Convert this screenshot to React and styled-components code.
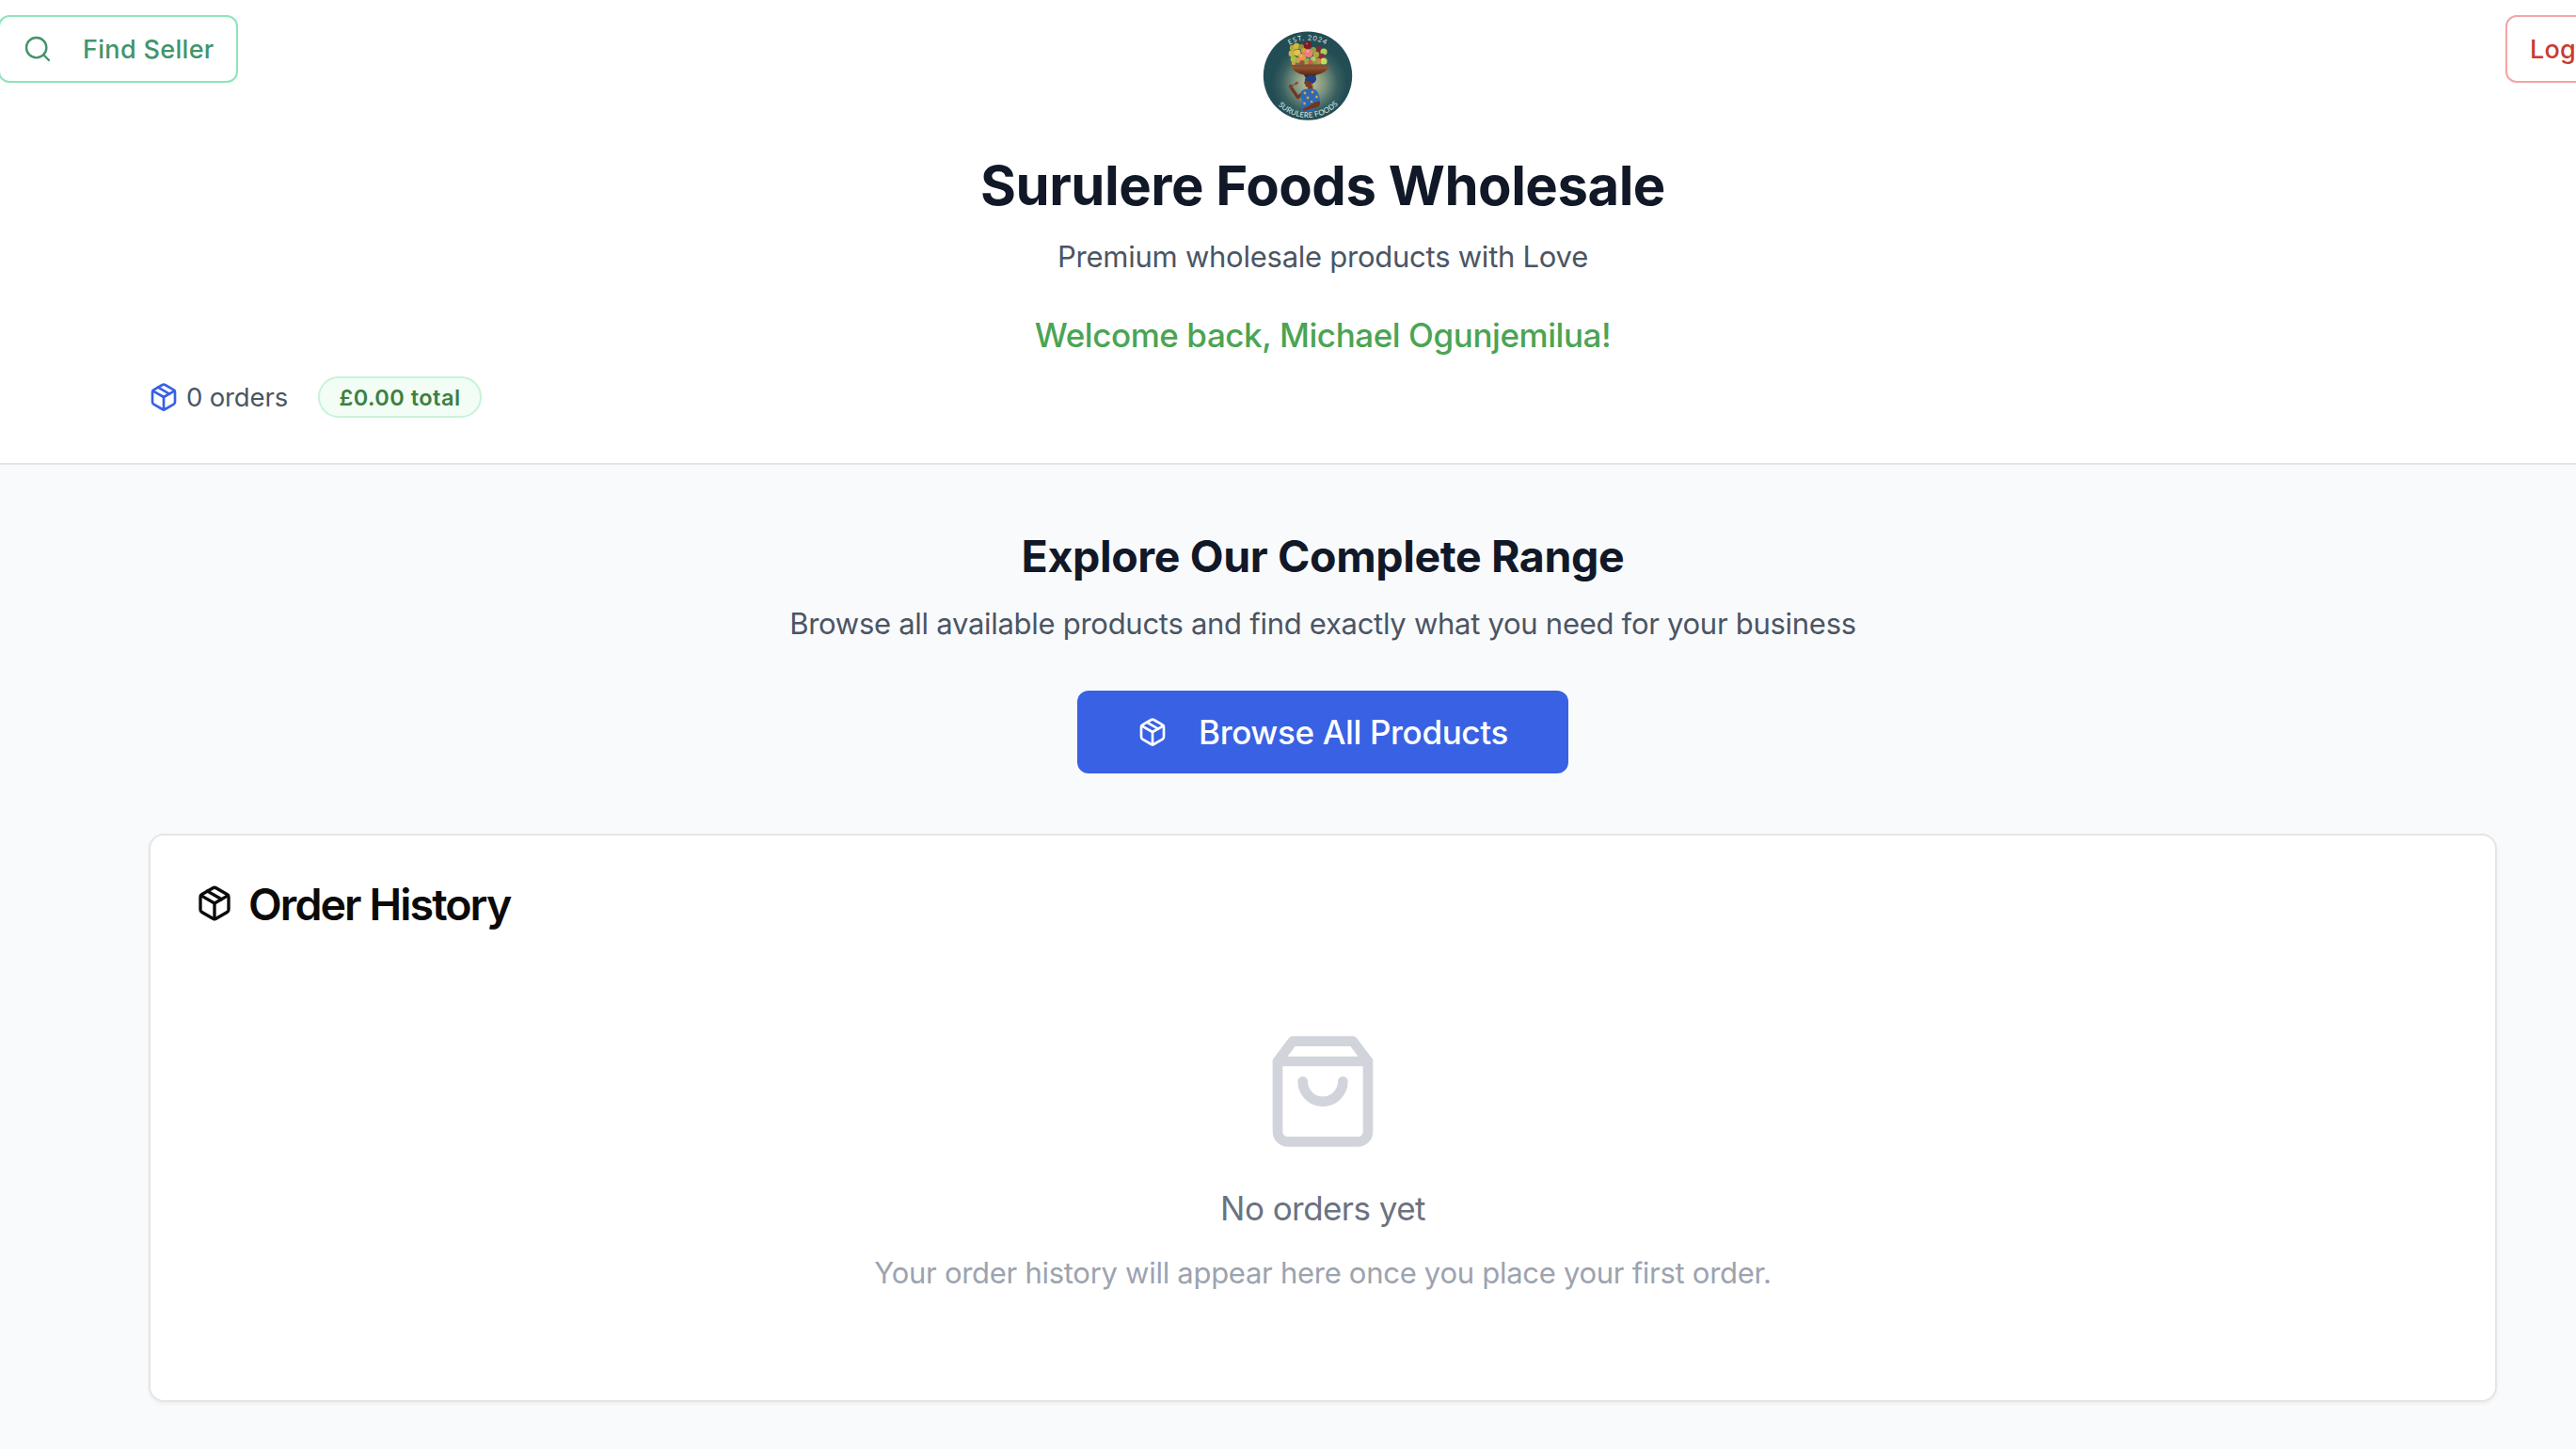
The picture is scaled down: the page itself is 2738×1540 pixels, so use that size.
import React from "react";
import styled, { createGlobalStyle } from "styled-components";

const GlobalStyle = createGlobalStyle`
  *, *::before, *::after { box-sizing: border-box; }
  html, body { margin: 0; padding: 0; overflow: hidden; background: #f9fafc; }
  body { font-family: Inter, "Liberation Sans", sans-serif; }
  h1, h2, h3, p { margin: 0; }
  svg { display: block; flex-shrink: 0; }
`;

const Page = styled.div`
  width: 2812px;
  height: 1540px;
  overflow: hidden;
  background: #f9fafc;
`;

const Header = styled.header`
  height: 494px;
  padding-top: 16px;
  background: #fff;
  border-bottom: 2px solid #e5e4e2;
`;

const TopBar = styled.div`
  display: grid;
  grid-template-columns: 1fr auto 1fr;
  align-items: start;
  margin: 0 -2px;
`;

const OutlineButton = styled.button`
  display: flex;
  align-items: center;
  gap: 32px;
  height: 72px;
  width: ${(p) => p.$width}px;
  padding: 0 24px;
  justify-self: ${(p) => p.$side};
  border: 2px solid ${(p) => p.$border};
  border-radius: 12px;
  background: #fff;
  color: ${(p) => p.$color};
  font: 500 27px/40px Inter, "Liberation Sans", sans-serif;
  letter-spacing: ${(p) => p.$track}px;
  white-space: nowrap;
`;

const ButtonLabel = styled.span`
  padding-top: 1px;
`;

const LogoFrame = styled.div`
  width: 96px;
  height: 96px;
  margin: 16px 32px 0 0;
`;

const Container = styled.div`
  width: 2496px;
  margin: 0 auto;
`;

const Intro = styled.div`
  display: flex;
  flex-direction: column;
  align-items: center;
  text-align: center;
  white-space: nowrap;
`;

const Title = styled.h1`
  margin-top: 33px;
  font-size: 58px;
  line-height: 72px;
  font-weight: 700;
  letter-spacing: ${(p) => p.$track}px;
  color: #111827;
`;

const Lead = styled.p`
  margin-top: ${(p) => p.$gap || 16}px;
  font-size: 31px;
  line-height: 48px;
  letter-spacing: ${(p) => p.$track}px;
  color: ${(p) => p.$color || "#4b5563"};
`;

const Welcome = styled.p`
  margin-top: 31px;
  font-size: 35px;
  line-height: 56px;
  font-weight: 500;
  letter-spacing: ${(p) => p.$track}px;
  color: #4ba453;
`;

const Stats = styled.div`
  display: flex;
  align-items: center;
  gap: 32px;
  margin-top: 16px;
  height: 44px;
`;

const OrderCount = styled.div`
  display: flex;
  align-items: center;
  gap: 8px;
  width: 148px;
  font-size: 27.5px;
  line-height: 40px;
  letter-spacing: ${(p) => p.$track}px;
  color: #4b5563;
  white-space: nowrap;
`;

const Badge = styled.div`
  display: flex;
  align-items: center;
  justify-content: center;
  width: 174px;
  height: 44px;
  padding-top: 1px;
  border: 2px solid #c6f4d4;
  border-radius: 22px;
  background: #f2fdf5;
  color: #3c803f;
  font-size: 23.5px;
  line-height: 32px;
  font-weight: 600;
  letter-spacing: ${(p) => p.$track}px;
  white-space: nowrap;
`;

const Explore = styled(Intro)`
  padding-top: 65px;
`;

const SectionTitle = styled.h2`
  font-size: 46.5px;
  line-height: 64px;
  font-weight: 700;
  letter-spacing: ${(p) => p.$track}px;
  color: #111827;
`;

const PrimaryButton = styled.button`
  display: flex;
  align-items: center;
  gap: 33px;
  width: 522px;
  height: 88px;
  margin-top: 47px;
  padding: 0 64px;
  border: 0;
  border-radius: 12px;
  background: #3861e4;
  color: #fff;
  font: 500 35px/56px Inter, "Liberation Sans", sans-serif;
  letter-spacing: ${(p) => p.$track}px;
  white-space: nowrap;
`;

const Card = styled.section`
  height: 604px;
  margin-top: 64px;
  padding: 48px;
  border: 2px solid #e5e5e5;
  border-radius: 16px;
  background: #fff;
  box-shadow: 0 2px 4px rgba(0, 0, 0, 0.05);
`;

const CardTitle = styled.h3`
  display: flex;
  align-items: center;
  gap: 16px;
  height: 48px;
  font-size: 46.5px;
  line-height: 48px;
  font-weight: 600;
  letter-spacing: ${(p) => p.$track}px;
  color: #0c0a09;
`;

const CardTitleText = styled.span`
  padding-top: 2px;
`;

const Empty = styled(Intro)`
  padding-top: 112px;
`;

const EmptyTitle = styled.p`
  margin-top: 32px;
  font-size: 35px;
  line-height: 56px;
  letter-spacing: ${(p) => p.$track}px;
  color: #6b7280;
`;

const PackageIcon = ({ size, color = "currentColor" }) => (
  <svg width={size} height={size} viewBox="0 0 24 24" fill="none" stroke={color} strokeWidth="2" strokeLinecap="round" strokeLinejoin="round">
    <path d="m7.5 4.27 9 5.15" />
    <path d="M21 8a2 2 0 0 0-1-1.73l-7-4a2 2 0 0 0-2 0l-7 4A2 2 0 0 0 3 8v8a2 2 0 0 0 1 1.73l7 4a2 2 0 0 0 2 0l7-4A2 2 0 0 0 21 16Z" />
    <path d="m3.3 7 8.7 5 8.7-5" />
    <path d="M12 22V12" />
  </svg>
);

const SearchIcon = () => (
  <svg width="32" height="32" viewBox="0 0 24 24" fill="none" stroke="currentColor" strokeWidth="1.8" strokeLinecap="round" strokeLinejoin="round">
    <circle cx="11" cy="11" r="8" />
    <path d="m21 21-4.3-4.3" />
  </svg>
);

const BagIcon = () => (
  <svg width="128" height="128" viewBox="0 0 24 24" fill="none" stroke="#d1d5db" strokeWidth="2" strokeLinecap="round" strokeLinejoin="round">
    <path d="M6 2 3 6v14a2 2 0 0 0 2 2h14a2 2 0 0 0 2-2V6l-3-4Z" />
    <path d="M3 6h18" />
    <path d="M16 10a4 4 0 0 1-8 0" />
  </svg>
);

const fruits = [
  [32, 19, 3.2, "#b9a83a"], [36, 17, 3.2, "#d0b93f"], [31, 25, 3.4, "#c8b440"], [41, 18, 3, "#9a8f3a"],
  [60, 20, 3.2, "#7c2a35"], [65, 23, 3.6, "#b4cc55"], [44, 22, 3, "#d2a03f"], [54, 21, 3, "#8aa446"],
  [48, 16, 4.2, "#7b1c26"], [37, 24, 3.6, "#e0c450"], [57, 26, 3.2, "#b5a23e"], [33, 31, 3.4, "#a9c04b"],
  [49, 24.5, 4.6, "#ec7f78"], [42, 29, 4, "#f0954a"], [37.5, 32, 3, "#c4a548"], [63, 28, 3.2, "#8a3040"],
  [65, 33, 3.6, "#c2da62"], [47, 33.5, 3.4, "#8fae4a"], [54, 31, 3, "#b2cc60"], [59, 33, 3.2, "#c98a3f"],
  [51, 34, 2.6, "#d1584d"], [42, 34.5, 2.6, "#a84a3a"], [56, 35, 2.2, "#7fa043"], [33, 35, 2.2, "#c9a740"],
];

const Logo = () => (
  <svg width="96" height="96" viewBox="0 0 96 96">
    <defs>
      <radialGradient id="glow" cx="52%" cy="58%" r="42%">
        <stop offset="0" stopColor="#c0c5a0" />
        <stop offset="0.4" stopColor="#809680" />
        <stop offset="0.75" stopColor="#386060" />
        <stop offset="1" stopColor="#234d55" />
      </radialGradient>
      <linearGradient id="basket" x1="0" y1="0" x2="0" y2="1">
        <stop offset="0" stopColor="#a35f35" />
        <stop offset="1" stopColor="#5a2a18" />
      </linearGradient>
      <path id="topArc" d="M10 48.5 A38 38 0 0 1 86 48.5" />
      <path id="bottomArc" d="M3.5 48.5 A44.5 44.5 0 0 0 92.5 48.5" />
    </defs>
    <circle cx="48" cy="48.6" r="47.2" fill="url(#glow)" />
    {fruits.map(([x, y, r, fill], i) => (
      <circle key={i} cx={x} cy={y} r={r} fill={fill} />
    ))}
    <g fill="#fff" opacity="0.35">
      <circle cx="48" cy="22.5" r="1.3" />
      <circle cx="41" cy="27.5" r="1.1" />
      <circle cx="64" cy="31.5" r="1" />
      <circle cx="47" cy="14.5" r="1" />
    </g>
    <path d="M44 47h13l-1 3H45Z" fill="#4a2418" />
    <path d="M30.5 38C32 43 37 46.5 44 47.5h13C64 46.5 69 43 70.8 38Z" fill="url(#basket)" />
    <ellipse cx="50.6" cy="38" rx="20.3" ry="1.8" fill="#8d4c2b" />
    <path d="M35 42.5c10 2.4 21 2.4 31 0" fill="none" stroke="#6d371f" strokeWidth="0.7" />
    <path d="M45.5 52c-.6 2-1.6 4.3-1.2 5l1 .4c0 2 .4 3 2.6 3.2l.6 3.4h5l-.3-6 1.8-6Z" fill="#7a3a24" />
    <path d="M45 53.5c0-4 3-5.5 6.5-5.5 4 0 6 2 5.5 4.5-.4 2.5-2.5 4-4.5 4-1-1.5-4-2.5-7.5-3Z" fill="#213f87" />
    <circle cx="53" cy="58" r="1" fill="#d58b38" />
    <path
      d="M42 67.5 37.5 71.5 30.5 61.5"
      fill="none"
      stroke="#713621"
      strokeWidth="3.2"
      strokeLinecap="round"
      strokeLinejoin="round"
    />
    <circle cx="30" cy="60" r="2.2" fill="#7d4027" />
    <path d="m30.5 60 5-3.5" stroke="#7a452b" strokeWidth="1" strokeLinecap="round" />
    <ellipse cx="36" cy="56.500" rx="2.200" ry="1.300" transform="rotate(-35 36 56.500)" fill="#8a4b2d" />
    <path d="M41.5 64.5c3-2 8-2.800 12-2 4 .7 6 4 7 9l.7 6-5.200 4-1.500 5H41.500l-1-6 2-5-2.500-5Z" fill="#2d6ab2" />
    <path d="M60.800 75.500c.8 4-1 6-5 7L44 86l-2-2 10-5 4-2.500Z" fill="#713621" />
    <g fill="#e0a040">
      <circle cx="45" cy="67" r="1.4" />
      <circle cx="53" cy="66" r="1.4" />
      <circle cx="57.5" cy="71" r="1.4" />
      <circle cx="48" cy="72" r="1.4" />
      <circle cx="52" cy="76" r="1.3" />
      <circle cx="44.5" cy="78" r="1.4" />
    </g>
    <g fill="#dfe7e4" fontFamily='Lato, "Liberation Sans", sans-serif'>
      <text fontSize="7.4" letterSpacing="0.9" textAnchor="middle">
        <textPath href="#topArc" startOffset="50%">EST. 2024</textPath>
      </text>
      <text fontSize="8" letterSpacing="0.15" textAnchor="middle">
        <textPath href="#bottomArc" startOffset="50.5%">SURULERE FOODS</textPath>
      </text>
    </g>
  </svg>
);

export default function App() {
  return (
    <>
      <GlobalStyle />
      <Page>
        <Header>
          <TopBar>
            <OutlineButton $side="start" $width={255} $border="#8ee5b9" $color="#43946b" $track={0.32}>
              <SearchIcon />
              <ButtonLabel>Find Seller</ButtonLabel>
            </OutlineButton>
            <LogoFrame>
              <Logo />
            </LogoFrame>
            <OutlineButton $side="end" $width={151} $border="#f2a5a5" $color="#c93a32" $track={0.2}>
              <ButtonLabel>Logout</ButtonLabel>
            </OutlineButton>
          </TopBar>
          <Container>
            <Intro>
              <Title $track={-0.48}>Surulere Foods Wholesale</Title>
              <Lead $track={-0.25}>Premium wholesale products with Love</Lead>
              <Welcome $track={-0.43}>Welcome back, Michael Ogunjemilua!</Welcome>
            </Intro>
            <Stats>
              <OrderCount $track={-0.15}>
                <PackageIcon size={32} color="#3861e4" />
                0 orders
              </OrderCount>
              <Badge $track={0.48}>£0.00 total</Badge>
            </Stats>
          </Container>
        </Header>
        <Container as="main">
          <Explore>
            <SectionTitle $track={-0.37}>Explore Our Complete Range</SectionTitle>
            <Lead $track={-0.28}>Browse all available products and find exactly what you need for your business</Lead>
            <PrimaryButton $track={-0.36}>
              <PackageIcon size={32} />
              Browse All Products
            </PrimaryButton>
          </Explore>
          <Card>
            <CardTitle $track={-1.9}>
              <PackageIcon size={40} />
              <CardTitleText>Order History</CardTitleText>
            </CardTitle>
            <Empty>
              <BagIcon />
              <EmptyTitle $track={-0.55}>No orders yet</EmptyTitle>
              <Lead $gap={17} $track={-0.28} $color="#9ca3af">Your order history will appear here once you place your first order.</Lead>
            </Empty>
          </Card>
        </Container>
      </Page>
    </>
  );
}
